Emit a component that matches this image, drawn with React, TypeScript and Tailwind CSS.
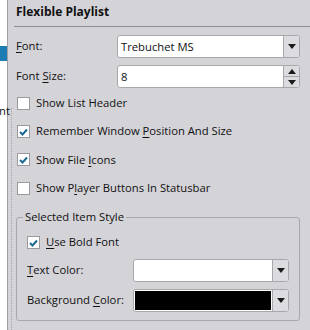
import React from "react";

const U = ({ children }: { children: React.ReactNode }) => (
  <span className="underline underline-offset-2 decoration-1">{children}</span>
);

const Check = ({ checked }: { checked?: boolean }) => (
  <div className="w-[13px] h-[13px] bg-white border border-[#9a9a9e] flex items-center justify-center shrink-0">
    {checked && (
      <svg width="9" height="8" viewBox="0 0 9 8">
        <path d="M1 4 L3.5 6.5 L8 1.5" stroke="#1c6a94" strokeWidth="2" fill="none" />
      </svg>
    )}
  </div>
);

const Arrow = ({ up }: { up?: boolean }) => (
  <svg width="8" height="5" viewBox="0 0 8 5">
    <path d={up ? "M0 5 L4 0 L8 5 Z" : "M0 0 L8 0 L4 5 Z"} fill="#1a1a1a" />
  </svg>
);

const DropBtn = () => (
  <div className="w-[16px] self-stretch flex items-center justify-center border-l border-[#a8a8ac] bg-[#dcdbe0] rounded-r-[3px]">
    <Arrow />
  </div>
);

const CheckRow = ({ checked, children }: { checked?: boolean; children: React.ReactNode }) => (
  <div className="flex items-center gap-[6px] h-[28.4px]">
    <Check checked={checked} />
    <span>{children}</span>
  </div>
);

export default function App() {
  return (
    <div
      className="w-[310px] h-[330px] bg-[#d4d3d8] flex overflow-hidden text-[11.25px] text-[#111]"
      style={{ fontFamily: '"Open Sans", "Noto Sans", sans-serif' }}
    >
      <div className="relative w-[8px] bg-white border-r border-[#a0a0a4] shrink-0">
        <div className="absolute left-0 top-[46px] w-[7px] h-[15px] bg-[#1b7db3]" />
        <div className="absolute left-[-1px] top-[104px] leading-[14px] whitespace-nowrap">nt</div>
      </div>
      <div className="relative flex-1 flex flex-col">
        <div className="absolute left-[3px] top-[108px] bottom-0 border-l border-dotted border-[#a8a8ac]" />
        <div className="pt-[3px] h-[27px] border-b border-[#8e8e92] ml-[6px]">
          <span className="font-bold text-[12px] relative left-[2px]">Flexible Playlist</span>
        </div>
        <div className="pl-[8px] pr-[10px] pt-[8px] flex flex-col">
          <div className="flex items-center h-[23px]">
            <span className="w-[101px]"><U>F</U>ont:</span>
            <div className="flex-1 h-[23px] flex bg-white border border-[#a8a8ac] rounded-[3px]">
              <span className="flex-1 pl-[3px] leading-[21px]">Trebuchet MS</span>
              <DropBtn />
            </div>
          </div>
          <div className="flex items-center h-[23px] mt-[7px]">
            <span className="w-[101px]">Font <U>S</U>ize:</span>
            <div className="flex-1 h-[23px] flex bg-white border border-[#a8a8ac] rounded-[3px]">
              <span className="flex-1 pl-[3px] leading-[21px]">8</span>
              <div className="w-[16px] flex flex-col border-l border-[#a8a8ac] bg-[#dcdbe0] rounded-r-[3px]">
                <div className="flex-1 flex items-center justify-center border-b border-[#a8a8ac]">
                  <Arrow up />
                </div>
                <div className="flex-1 flex items-center justify-center">
                  <Arrow />
                </div>
              </div>
            </div>
          </div>
          <div className="mt-[1px] pl-[1px]">
            <CheckRow>Show List Header</CheckRow>
            <CheckRow checked>
              Remember Window <U>P</U>osition And Size
            </CheckRow>
            <CheckRow checked>
              Show File <U>I</U>cons
            </CheckRow>
            <CheckRow>
              Show P<U>l</U>ayer Buttons In Statusbar
            </CheckRow>
          </div>
          <div className="relative mt-[14px] h-[104px] border border-[#a8a8ac] rounded-[3px] pl-[10px] pr-[10px] pt-[17px]">
            <span className="absolute left-[6px] top-[-10px] px-[2px] bg-[#d4d3d8] leading-[18px]">
              Selected Item Style
            </span>
            <div className="flex items-center gap-[6px] h-[16px]">
              <Check checked />
              <span>
                <U>U</U>se Bold Font
              </span>
            </div>
            <div className="flex items-center h-[23px] mt-[8px]">
              <span className="w-[106px]">
                <U>T</U>ext Color:
              </span>
              <div className="flex-1 h-[23px] flex bg-white border border-[#a8a8ac] rounded-[3px]">
                <span className="flex-1" />
                <DropBtn />
              </div>
            </div>
            <div className="flex items-center h-[23px] mt-[7px]">
              <span className="w-[106px]">
                Background <U>C</U>olor:
              </span>
              <div className="flex-1 h-[23px] flex bg-white border border-[#a8a8ac] rounded-[3px]">
                <span className="flex-1 bg-black m-[1px]" />
                <DropBtn />
              </div>
            </div>
          </div>
        </div>
      </div>
    </div>
  );
}
